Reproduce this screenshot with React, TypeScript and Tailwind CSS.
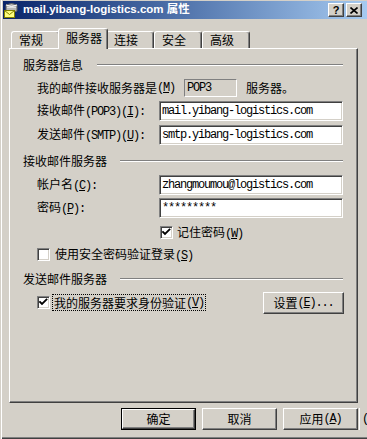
import React from "react";

const mono = "font-['Liberation_Mono',monospace] text-[12px] tracking-[-1.2px]";
const sunken =
  "border border-t-[#808080] border-l-[#808080] border-b-white border-r-white shadow-[inset_1px_1px_0_#404040,inset_-1px_-1px_0_#d4d0c8]";
const raised =
  "border border-t-white border-l-white border-r-[#404040] border-b-[#404040] shadow-[inset_-1px_-1px_0_#808080]";

function Mn({ c, pre = "", post = "" }: { c: string; pre?: string; post?: string }) {
  return (
    <span className={mono}>
      {pre}(<span className="underline underline-offset-[1px]">{c}</span>){post}
    </span>
  );
}

function Check({ checked }: { checked: boolean }) {
  return (
    <div className={`w-[13px] h-[13px] shrink-0 bg-white ${sunken}`}>
      {checked && (
        <svg width="11" height="11" viewBox="0 0 11 11" className="block">
          <path d="M2 5 L4 7 L8.5 2.5" stroke="#000" strokeWidth="1.8" fill="none" strokeLinecap="square" />
        </svg>
      )}
    </div>
  );
}

function Group({ label, gap }: { label: string; gap: string }) {
  return (
    <div className="flex items-center h-[16px]">
      <span className="shrink-0">{label}</span>
      <div className={`flex-1 ${gap} border-t border-t-[#808080] border-b border-b-white`} />
    </div>
  );
}

function Field({ value }: { value: string }) {
  return (
    <div className={`w-[184px] h-[20px] shrink-0 bg-white flex items-center pl-[2px] ${sunken}`}>
      <span className={mono}>{value}</span>
    </div>
  );
}

function Tab({ label, w, selected }: { label: string; w: string; selected?: boolean }) {
  return (
    <div
      className={`${w} ${
        selected ? "h-[21px] -mx-[2px] -mb-[1px] pt-[3px] relative z-10" : "h-[17px] pt-[2px]"
      } pl-[7px] bg-[#d4d0c8] rounded-t-[3px] border-t border-l border-r border-t-white border-l-white border-r-[#404040] shadow-[inset_-1px_0_0_#808080] shrink-0`}
    >
      {label}
    </div>
  );
}

function Btn({ children, def }: { children: React.ReactNode; def?: boolean }) {
  return (
    <div className={`w-[75px] h-[22px] shrink-0 ${def ? "border border-black" : ""}`}>
      <div className={`w-full h-full flex items-center justify-center bg-[#d4d0c8] ${raised}`}>{children}</div>
    </div>
  );
}

export default function App() {
  return (
    <div className="relative w-[367px] h-[439px] overflow-hidden bg-[#d4d0c8] text-black text-[12px] leading-none font-['Noto_Sans_CJK_SC','Noto_Sans',sans-serif] pt-[1px] pl-[3px] shadow-[inset_1px_0_0_#d4d0c8,inset_2px_0_0_#ffffff,inset_0_-1px_0_#404040,inset_0_-2px_0_#808080]">
      {/* title bar */}
      <div className="h-[18px] flex items-center bg-linear-to-r from-[#0a246a] to-[#a6caf0] pr-[5px]">
        <svg width="17" height="16" viewBox="0 0 17 16" className="shrink-0">
          <path d="M3 3 Q8.5 0 14 3 L14 9 Q8.5 12 3 9 Z" fill="#b8b8b8" stroke="#606060" strokeWidth="1" />
          <path d="M3 3 Q8.5 6 14 3" fill="none" stroke="#ffffff" strokeWidth="1" />
          <path d="M4 5.5 L13 5.5" stroke="#e0e0e0" strokeWidth="1" />
          <rect x="1.5" y="8.5" width="10" height="7" fill="#ffff80" stroke="#808000" />
          <path d="M1.5 8.5 L6.5 12.5 L11.5 8.5" fill="none" stroke="#808000" />
        </svg>
        <span className="ml-[3px] text-white font-bold text-[11.5px] font-['Liberation_Sans','Noto_Sans_CJK_SC',sans-serif] whitespace-nowrap">
          mail.yibang-logistics.com 属性
        </span>
        <div className="flex-1" />
        <div className={`w-[16px] h-[14px] flex items-center justify-center bg-[#d4d0c8] ${raised}`}>
          <span className="font-bold text-[11px] font-['Liberation_Sans',sans-serif]">?</span>
        </div>
        <div className={`ml-[2px] w-[16px] h-[14px] flex items-center justify-center bg-[#d4d0c8] ${raised}`}>
          <svg width="8" height="7" viewBox="0 0 8 7">
            <path d="M0.5 0.5 L7.5 6.5 M7.5 0.5 L0.5 6.5" stroke="#000" strokeWidth="1.6" />
          </svg>
        </div>
      </div>

      {/* tabs */}
      <div className="flex items-end h-[20px] mt-[9px] ml-[8px] relative z-10">
        <Tab label="常规" w="w-[49px]" />
        <Tab label="服务器" w="w-[50px]" selected />
        <Tab label="连接" w="w-[48px]" />
        <Tab label="安全" w="w-[48px]" />
        <Tab label="高级" w="w-[48px]" />
      </div>

      {/* panel */}
      <div className="ml-[6px] w-[349px] h-[355px] border border-t-white border-l-white border-r-[#404040] border-b-[#404040] shadow-[inset_-1px_-1px_0_#808080] flex flex-col pl-[13px] pr-[14px]">
        <div className="mt-[8px]">
          <Group label="服务器信息" gap="ml-[14px]" />
        </div>
        <div className="mt-[5px] h-[19px] pl-[14px] flex items-center whitespace-nowrap">
          <span>我的邮件接收服务器是</span>
          <Mn c="M" />
          <div className={`ml-[9px] w-[53px] h-[18px] flex items-center pl-[2px] bg-[#d4d0c8] border border-t-[#808080] border-l-[#808080] border-b-white border-r-white`}>
            <span className={mono}>POP3</span>
          </div>
          <span className="ml-[9px]">服务器。</span>
        </div>
        <div className="mt-[4px] h-[20px] pl-[14px] flex items-center whitespace-nowrap">
          <span className="w-[122px] shrink-0">
            接收邮件<Mn pre="(POP3)" c="I" post=":" />
          </span>
          <Field value="mail.yibang-logistics.com" />
        </div>
        <div className="mt-[4px] h-[20px] pl-[14px] flex items-center whitespace-nowrap">
          <span className="w-[122px] shrink-0">
            发送邮件<Mn pre="(SMTP)" c="U" post=":" />
          </span>
          <Field value="smtp.yibang-logistics.com" />
        </div>

        <div className="mt-[8px]">
          <Group label="接收邮件服务器" gap="ml-[13px]" />
        </div>
        <div className="mt-[6px] h-[20px] pl-[14px] flex items-center whitespace-nowrap">
          <span className="w-[122px] shrink-0">
            帐户名<Mn c="C" post=":" />
          </span>
          <Field value="zhangmoumou@logistics.com" />
        </div>
        <div className="mt-[3px] h-[20px] pl-[14px] flex items-center whitespace-nowrap">
          <span className="w-[122px] shrink-0">
            密码<Mn c="P" post=":" />
          </span>
          <Field value="*********" />
        </div>
        <div className="mt-[8px] h-[13px] pl-[137px] flex items-center whitespace-nowrap">
          <Check checked />
          <span className="ml-[4px]">
            记住密码<Mn c="W" />
          </span>
        </div>
        <div className="mt-[9px] h-[13px] pl-[14px] flex items-center whitespace-nowrap">
          <Check checked={false} />
          <span className="ml-[5px]">
            使用安全密码验证登录<Mn c="S" />
          </span>
        </div>

        <div className="mt-[10px]">
          <Group label="发送邮件服务器" gap="ml-[13px]" />
        </div>
        <div className="mt-[4px] h-[23px] pl-[14px] flex items-center whitespace-nowrap">
          <Check checked />
          <span className="ml-[2px] h-[17px] flex items-center px-[1px] border border-dotted border-black">
            我的服务器要求身份验证<Mn c="V" />
          </span>
          <div className="flex-1" />
          <div className="w-[81px] h-[22px] shrink-0 -mr-[1px]">
            <div className={`w-full h-full flex items-center justify-center bg-[#d4d0c8] ${raised}`}>
              设置<Mn c="E" post="..." />
            </div>
          </div>
        </div>
      </div>

      {/* bottom buttons */}
      <div className="mt-[5px] ml-[118px] flex items-center gap-[6px] whitespace-nowrap">
        <Btn def>确定</Btn>
        <Btn>取消</Btn>
        <Btn>
          应用<Mn c="A" />
        </Btn>
        <div className="-ml-[5px] h-[22px] pl-[2px] border-l border-l-white flex items-center">
          <span className={mono}>(</span>
        </div>
      </div>
    </div>
  );
}
